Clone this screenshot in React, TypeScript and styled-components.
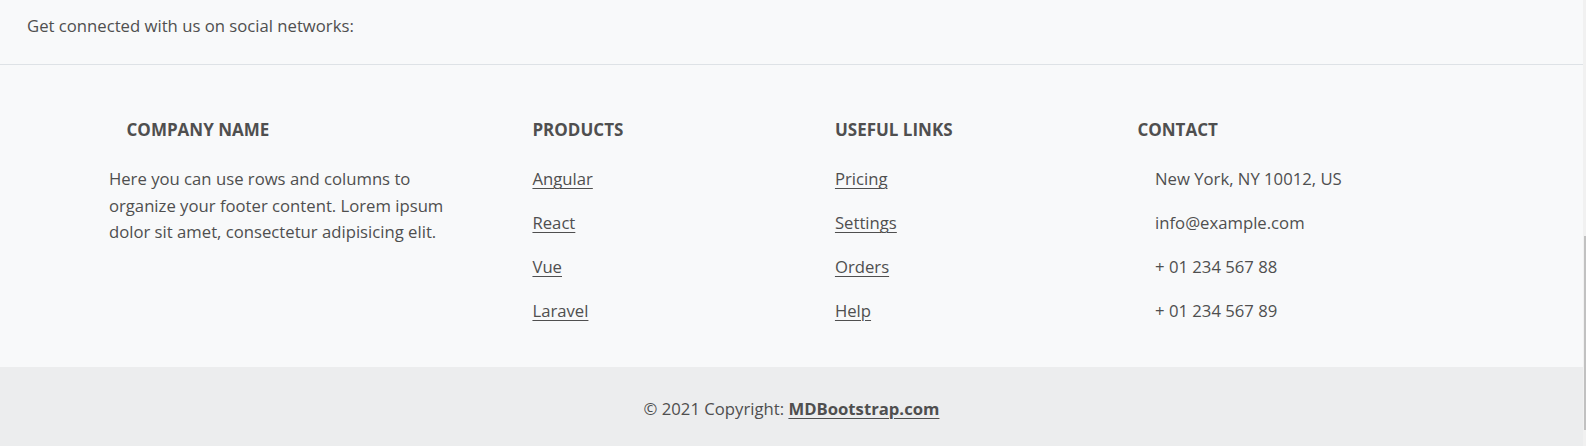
import React from "react";
import styled, { createGlobalStyle } from "styled-components";

const GlobalStyle = createGlobalStyle`
  html, body { margin: 0; padding: 0; }
  body {
    width: 1586px;
    height: 446px;
    overflow: hidden;
    background: #f8f9fa;
    font-family: "Open Sans", "Noto Sans", sans-serif;
    color: #4f4f4f;
  }
`;

const Page = styled.div`
  display: flex;
  width: 1586px;
  height: 446px;
`;

const Footer = styled.footer`
  flex: 1;
  display: flex;
  flex-direction: column;
  background: #f8f9fa;
  font-size: 16.7px;
  line-height: 26.4px;
`;

const SocialBar = styled.section`
  padding: 13px 27px 24.4px;
  border-bottom: 1px solid #dee2e6;
`;

const Main = styled.section`
  flex: 1;
`;

const Container = styled.div`
  width: 1452px;
  margin: 54px auto 0;
  display: flex;
`;

const Col = styled.div<{ $w: number }>`
  flex: 0 0 ${(p) => p.$w}%;
  box-sizing: border-box;
  padding: 0 13.2px;
  margin: 0 auto 25px;
`;

const Heading = styled.h6<{ $indent?: boolean }>`
  margin: 0 0 26.4px;
  padding-left: ${(p) => (p.$indent ? "17.6px" : "0")};
  font-size: 17px;
  line-height: 21.1px;
  font-weight: 700;
  text-transform: uppercase;
  color: #4f4f4f;
`;

const Text = styled.p`
  margin: 0 0 17.6px;
`;

const LinkItem = styled.p`
  margin: 0 0 17.6px;
`;

const Link = styled.a`
  color: inherit;
  text-decoration: underline;
  text-underline-offset: 3px;
  text-decoration-thickness: 1px;
`;

const ContactItem = styled.p`
  margin: 0 0 17.6px;
  padding-left: 17.6px;
`;

const Bottom = styled.div`
  background: #ecedee;
  padding: 28.4px 0 24.4px;
  text-align: center;
`;

const BrandLink = styled.a`
  color: #4f4f4f;
  font-weight: 700;
  text-decoration: underline;
  text-underline-offset: 3px;
  text-decoration-thickness: 1px;
`;

const ScrollTrack = styled.div`
  width: 3px;
  background: #f1f1f1;
  padding-top: 236px;
  box-sizing: border-box;
`;

const ScrollThumb = styled.div`
  width: 2px;
  height: 194px;
  margin-left: 1px;
  background: #c1c1c1;
`;

const products = ["Angular", "React", "Vue", "Laravel"];
const links = ["Pricing", "Settings", "Orders", "Help"];
const contacts = [
  "New York, NY 10012, US",
  "info@example.com",
  "+ 01 234 567 88",
  "+ 01 234 567 89",
];

export default function App() {
  return (
    <>
      <GlobalStyle />
      <Page>
        <Footer>
          <SocialBar>Get connected with us on social networks:</SocialBar>
          <Main>
            <Container>
              <Col $w={25}>
                <Heading $indent>Company name</Heading>
                <Text>
                  Here you can use rows and columns to organize your footer
                  content. Lorem ipsum dolor sit amet, consectetur adipisicing
                  elit.
                </Text>
              </Col>
              <Col $w={16.6667}>
                <Heading>Products</Heading>
                {products.map((p) => (
                  <LinkItem key={p}>
                    <Link href="#!">{p}</Link>
                  </LinkItem>
                ))}
              </Col>
              <Col $w={16.6667}>
                <Heading>Useful links</Heading>
                {links.map((p) => (
                  <LinkItem key={p}>
                    <Link href="#!">{p}</Link>
                  </LinkItem>
                ))}
              </Col>
              <Col $w={25}>
                <Heading>Contact</Heading>
                {contacts.map((c) => (
                  <ContactItem key={c}>{c}</ContactItem>
                ))}
              </Col>
            </Container>
          </Main>
          <Bottom>
            © 2021 Copyright: <BrandLink href="#!">MDBootstrap.com</BrandLink>
          </Bottom>
        </Footer>
        <ScrollTrack>
          <ScrollThumb />
        </ScrollTrack>
      </Page>
    </>
  );
}
